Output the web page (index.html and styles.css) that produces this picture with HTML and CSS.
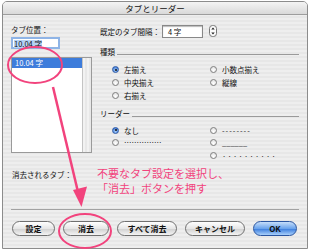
FILE: index.html
```html
<!DOCTYPE html>
<html lang="ja">

<head>
	<title>タブとリーダー</title>
	<meta charset="utf-8">
	<link rel="stylesheet" href="styles.css">
</head>

<body>
	<div class="window">
		<div class="titlebar">タブとリーダー</div>

		<div class="content">
			<div class="columns">
				<div class="left">
					<div class="label">タブ位置：</div>
					<div class="field focused"><span class="selection">10.04 字</span></div>
					<div class="list">
						<div class="list-body">
							<div class="list-row selected">10.04 字</div>
						</div>
						<div class="scrollbar"></div>
					</div>
				</div>

				<div class="right">
					<div class="interval">
						<span class="label">既定のタブ間隔：</span>
						<div class="field small">4 字</div>
						<svg class="stepper" width="8" height="12" viewBox="0 0 8 12">
							<rect x="0.5" y="0.5" width="7" height="11" rx="3" fill="#fafafa" stroke="#777"/>
							<path d="M2.3 4.6 L4 2.6 L5.7 4.6 Z M2.3 7.4 L4 9.4 L5.7 7.4 Z" fill="#222"/>
						</svg>
					</div>

					<div class="group-title kind"><span>種類</span><i class="rule"></i></div>
					<div class="radios">
						<div class="radio"><b class="dot checked"></b>左揃え</div>
						<div class="radio"><b class="dot"></b>小数点揃え</div>
						<div class="radio"><b class="dot"></b>中央揃え</div>
						<div class="radio"><b class="dot"></b>縦線</div>
						<div class="radio"><b class="dot"></b>右揃え</div>
					</div>

					<div class="group-title leader"><span>リーダー</span><i class="rule"></i></div>
					<div class="radios tight">
						<div class="radio"><b class="dot checked"></b>なし</div>
						<div class="radio"><b class="dot"></b><span class="dashes">--------</span></div>
						<div class="radio"><b class="dot"></b><span class="dotted">……………</span></div>
						<div class="radio"><b class="dot"></b><span class="unders">______</span></div>
						<div class="radio"></div>
						<div class="radio"><b class="dot"></b><span class="points">··········</span></div>
					</div>
				</div>
			</div>

			<div class="label cleared">消去されるタブ：</div>
			<div class="separator"></div>

			<div class="buttons">
				<div class="button w-set">設定</div>
				<div class="button w-clear">消去</div>
				<div class="button w-wide">すべて消去</div>
				<div class="button w-wide">キャンセル</div>
				<div class="button default w-ok">OK</div>
			</div>
		</div>
	</div>

	<div class="note">不要なタブ設定を選択し、<br>「消去」ボタンを押す</div>

	<svg class="marks" width="310" height="250" viewBox="0 0 310 250">
		<ellipse cx="35" cy="65" rx="27" ry="18" fill="none" stroke="#f2437d" stroke-width="2"/>
		<line x1="53" y1="87" x2="78" y2="192" stroke="#f2437d" stroke-width="2.5"/>
		<path d="M73 190 L87 186.5 L81.5 207 Z" fill="#f2437d"/>
		<ellipse cx="85" cy="231" rx="26" ry="17" fill="none" stroke="#f2437d" stroke-width="2"/>
	</svg>
</body>
</html>
```

FILE: styles.css
```css
* {
	margin: 0;
	box-sizing: border-box;
}

body {
	font-family: 'Noto Sans CJK JP', sans-serif;
	font-size: 7.5px;
	color: #111;
	margin: 0;
	padding: 1px 2px 0 2px;
	width: 310px;
	height: 250px;
	background: white;
	position: relative;
	overflow: hidden;
}

.window {
	width: 306px;
	height: 248px;
	border: 1px solid #8c8c8c;
	border-radius: 5px 5px 0 0;
	background: repeating-linear-gradient(#eeeeee 0 2px, #e7e7e7 2px 4px);
}

.titlebar {
	height: 13px;
	line-height: 13px;
	text-align: center;
	font-size: 8.5px;
	border-radius: 4px 4px 0 0;
	border-bottom: 1px solid #9d9d9d;
	background: linear-gradient(#f4f4f4, #d9d9d9);
}

.content {
	padding: 9px 8px 0 8px;
}

.columns {
	display: flex;
	gap: 8px;
}

.left {
	width: 81px;
}

.right {
	flex: 1;
}

.label {
	height: 11px;
	line-height: 11px;
}

.field {
	background: white;
	border: 1px solid #888;
	line-height: 9px;
	padding-left: 2px;
}

.field.focused {
	margin-top: 2px;
	width: 49px;
	height: 12px;
	border: 2px solid #8fb4e6;
	padding: 0 0 0 1px;
}

.selection {
	background: #b5d2f5;
	display: inline-block;
	line-height: 8px;
}

.list {
	margin-top: 8px;
	height: 96px;
	border: 1px solid #9a9a9a;
	background: white;
	display: flex;
}

.list-body {
	flex: 1;
}

.list-row {
	height: 10px;
	line-height: 10px;
	padding-left: 3px;
}

.selected {
	background: #3d7cdb;
	color: white;
}

.scrollbar {
	width: 9px;
	border-left: 1px solid #c4c4c4;
	background: repeating-linear-gradient(90deg, #f2f2f2 0 2px, #e8e8e8 2px 4px);
}

.interval {
	display: flex;
	align-items: center;
	height: 14px;
}

.interval .label {
	width: 62px;
}

.field.small {
	width: 41px;
	height: 13px;
	line-height: 11px;
	padding-left: 5px;
	box-shadow: inset 0 1px 1px #bbb;
}

.stepper {
	margin-left: 6px;
}

.group-title {
	display: flex;
	align-items: flex-end;
	height: 10px;
	line-height: 10px;
}

.group-title.kind {
	margin-top: 9px;
}

.group-title.leader {
	margin-top: 7px;
}

.rule {
	flex: 1;
	height: 1px;
	margin: 0 0 2px 2px;
	background: #9a9a9a;
}

.radios {
	display: grid;
	grid-template-columns: 98px 1fr;
	grid-auto-rows: 13px;
	padding: 6px 0 0 12px;
}

.radios.tight {
	grid-auto-rows: 12.5px;
	padding-top: 5px;
}

.radio {
	display: flex;
	align-items: center;
	gap: 5px;
}

.dot {
	width: 7px;
	height: 7px;
	border-radius: 50%;
	border: 1px solid #7f7f7f;
	background: radial-gradient(circle at 50% 70%, #ffffff, #dcdcdc);
	position: relative;
}

.dot.checked {
	border-color: #2d5aa8;
	background: radial-gradient(circle at 50% 70%, #9cc5f6, #3a74d2);
}

.dot.checked::after {
	content: '';
	position: absolute;
	left: 1.5px;
	top: 1.5px;
	width: 2px;
	height: 2px;
	border-radius: 50%;
	background: #111;
}

.dashes {
	letter-spacing: 1px;
}

.points {
	letter-spacing: 1.3px;
}

.label.cleared {
	margin: 8px 0 0 1px;
	height: 10px;
	line-height: 10px;
}

.separator {
	margin-top: 29px;
	height: 1px;
	background: #a2a2a2;
}

.buttons {
	display: flex;
	gap: 8px;
	margin-top: 11px;
	padding-left: 1px;
}

.button {
	height: 15px;
	line-height: 13px;
	text-align: center;
	font-size: 8px;
	font-weight: bold;
	border: 1px solid #6f6f6f;
	border-radius: 8px;
	background: linear-gradient(#ffffff, #e6e6e6 50%, #d2d2d2 55%, #f4f4f4);
}

.button.default {
	border-color: #2a55a0;
	background: linear-gradient(#c6defa, #6aa3ec 50%, #3f80de 55%, #a9d0fb);
}

.w-set {
	width: 43px;
}

.w-clear {
	width: 46px;
}

.w-wide {
	width: 60px;
}

.w-ok {
	width: 44px;
}

.note {
	position: absolute;
	left: 97px;
	top: 166px;
	font-size: 11px;
	line-height: 15px;
	color: #f2437d;
}

.marks {
	position: absolute;
	left: 0;
	top: 0;
	pointer-events: none;
}
```
